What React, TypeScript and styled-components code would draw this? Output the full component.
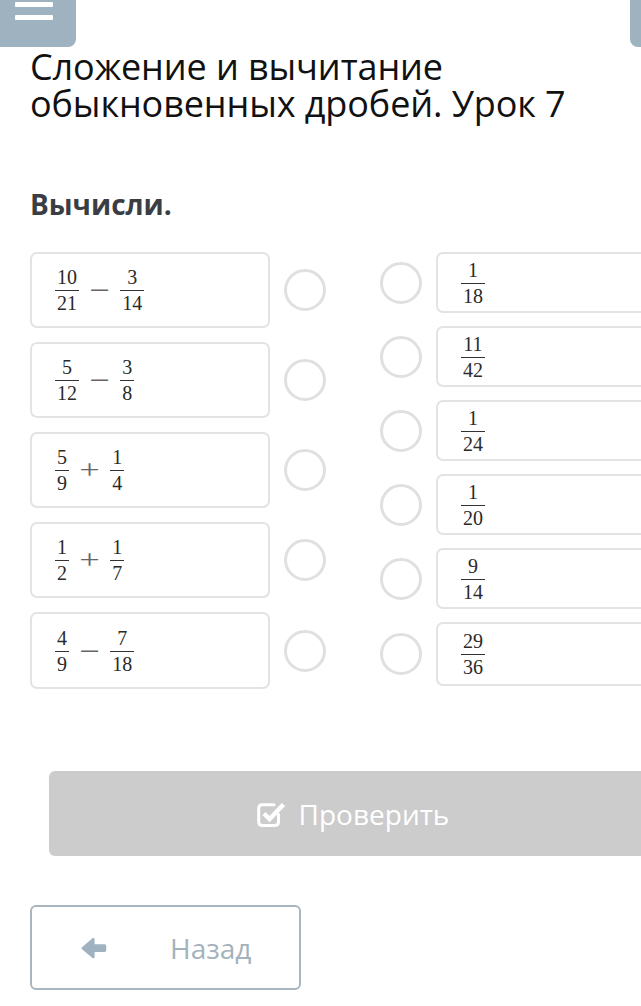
import styled, { createGlobalStyle } from 'styled-components';

const GlobalStyle = createGlobalStyle`
  html, body {
    margin: 0;
    padding: 0;
    background: #ffffff;
  }
  body {
    font-family: "Open Sans", "Noto Sans", sans-serif;
    overflow-x: hidden;
  }
`;

const Page = styled.div`
  width: 641px;
  min-height: 1006px;
  overflow: hidden;
`;

const TopBar = styled.div`
  display: flex;
  justify-content: space-between;
  height: 47px;
`;

const MenuButton = styled.button`
  width: 76px;
  height: 47px;
  border: none;
  padding: 2px 0 0 15px;
  background: #9eb2c0;
  border-bottom-right-radius: 8px;
  display: flex;
  flex-direction: column;
  gap: 8px;
  align-items: flex-start;
`;

const MenuLine = styled.span`
  display: block;
  width: 38px;
  height: 5px;
  background: #ffffff;
  border-radius: 1px;
`;

const SideButton = styled.div`
  width: 40px;
  height: 47px;
  margin-right: -29px;
  background: #9eb2c0;
  border-bottom-left-radius: 8px;
`;

const Content = styled.div`
  padding: 0 0 0 30px;
`;

const Title = styled.h1`
  margin: 0;
  padding-top: 1px;
  font-family: "Open Sans", "Noto Sans", sans-serif;
  font-weight: 400;
  font-size: 36px;
  line-height: 37px;
  color: #111111;
  letter-spacing: -0.1px;
`;

const Task = styled.h2`
  margin: 64px 0 0;
  font-family: "Open Sans", "Noto Sans", sans-serif;
  font-weight: 700;
  font-size: 28px;
  line-height: 36px;
  color: #3a3e43;
`;

const Matching = styled.div`
  display: flex;
  gap: 54px;
  margin-top: 30px;
`;

const Column = styled.div<{ $gap: number }>`
  display: flex;
  flex-direction: column;
  gap: ${(p) => p.$gap}px;
`;

const Row = styled.div`
  display: flex;
  align-items: center;
  gap: 14px;
`;

const Card = styled.div<{ $height: number }>`
  box-sizing: border-box;
  width: 240px;
  height: ${(p) => p.$height}px;
  border: 2px solid #e2e3e4;
  border-radius: 7px;
  padding: 0 22px;
  display: flex;
  align-items: center;
  flex-shrink: 0;
`;

const Radio = styled.span`
  box-sizing: border-box;
  width: 42px;
  height: 42px;
  border: 3px solid #dfe0e1;
  border-radius: 50%;
  flex-shrink: 0;
`;

const Expr = styled.span`
  display: inline-flex;
  align-items: center;
  font-family: "Liberation Serif", "DejaVu Serif", serif;
  color: #2a2a2a;
`;

const Frac = styled.span`
  display: inline-flex;
  flex-direction: column;
  align-items: stretch;
  font-size: 20px;
  line-height: 20px;
  text-align: center;
  padding: 0 1px;
`;

const Num = styled.span`
  padding: 0 2px 3px;
  border-bottom: 1px solid #333333;
`;

const Den = styled.span`
  padding: 2px 2px 0;
`;

const Op = styled.span`
  display: inline-block;
  font-size: 27px;
  line-height: 20px;
  color: #666666;
  margin: 0 12px;
  transform: scaleX(1.35);
`;

const CheckButton = styled.button`
  box-sizing: border-box;
  margin: 82px 0 0 19px;
  width: 608px;
  height: 85px;
  border: none;
  border-radius: 6px;
  background: #cccccc;
  color: #ffffff;
  font-family: "Open Sans", "Noto Sans", sans-serif;
  font-size: 28px;
  display: flex;
  align-items: center;
  justify-content: center;
  gap: 11px;
  padding: 0;
`;

const BackButton = styled.button`
  box-sizing: border-box;
  margin-top: 49px;
  width: 271px;
  height: 85px;
  border: 2px solid #a9b6bf;
  border-radius: 6px;
  background: #ffffff;
  color: #a4b2bb;
  font-family: "Open Sans", "Noto Sans", sans-serif;
  font-size: 28px;
  display: flex;
  align-items: center;
  padding: 0 0 0 48px;
`;

const BackLabel = styled.span`
  margin-left: 63px;
`;

type F = [string, string];
type Item = { parts: F[]; op: string };

const leftItems: Item[] = [
  { parts: [['10', '21'], ['3', '14']], op: '−' },
  { parts: [['5', '12'], ['3', '8']], op: '−' },
  { parts: [['5', '9'], ['1', '4']], op: '+' },
  { parts: [['1', '2'], ['1', '7']], op: '+' },
  { parts: [['4', '9'], ['7', '18']], op: '−' },
];

const rightItems: F[] = [
  ['1', '18'],
  ['11', '42'],
  ['1', '24'],
  ['1', '20'],
  ['9', '14'],
  ['29', '36'],
];

function Fraction({ value }: { value: F }) {
  return (
    <Frac>
      <Num>{value[0]}</Num>
      <Den>{value[1]}</Den>
    </Frac>
  );
}

function CheckSquareIcon() {
  return (
    <svg width="31" height="28" viewBox="0 0 31 28" fill="none">
      <path
        d="M21.5 14.5V21.5C21.5 24 20.2 25.5 17.5 25.5H5.5C3 25.5 1.7 24 1.7 21.5V8.5C1.7 6 3 4.7 5.5 4.7H17"
        stroke="#ffffff"
        strokeWidth="3"
        strokeLinecap="round"
      />
      <path d="M7 13.5L12.5 19L26.5 4.5" stroke="#ffffff" strokeWidth="4.5" />
    </svg>
  );
}

function ArrowLeftIcon() {
  return (
    <svg width="27" height="22" viewBox="0 0 27 22">
      <path
        d="M12.5 1.2L2 10.2C1.3 10.8 1.3 11.6 2 12.2L12.5 21C13.4 21.7 14.6 21 14.6 20V15H24.5C25.6 15 26.2 14.3 26.2 13.3V9C26.2 8 25.6 7.3 24.5 7.3H14.6V2.2C14.6 1.1 13.4 0.5 12.5 1.2Z"
        fill="#9eb2c0"
      />
    </svg>
  );
}

export default function App() {
  return (
    <Page>
      <GlobalStyle />
      <TopBar>
        <MenuButton aria-label="Меню">
          <MenuLine />
          <MenuLine />
        </MenuButton>
        <SideButton />
      </TopBar>
      <Content>
        <Title>
          Сложение и вычитание
          <br />
          обыкновенных дробей. Урок 7
        </Title>
        <Task>Вычисли.</Task>
        <Matching>
          <Column $gap={14}>
            {leftItems.map((item, i) => (
              <Row key={i}>
                <Card $height={i === 4 ? 77 : 76}>
                  <Expr>
                    <Fraction value={item.parts[0]} />
                    <Op>{item.op}</Op>
                    <Fraction value={item.parts[1]} />
                  </Expr>
                </Card>
                <Radio />
              </Row>
            ))}
          </Column>
          <Column $gap={13}>
            {rightItems.map((f, i) => (
              <Row key={i}>
                <Radio />
                <Card $height={i === 5 ? 64 : 61}>
                  <Expr>
                    <Fraction value={f} />
                  </Expr>
                </Card>
              </Row>
            ))}
          </Column>
        </Matching>
        <CheckButton>
          <CheckSquareIcon />
          Проверить
        </CheckButton>
        <BackButton>
          <ArrowLeftIcon />
          <BackLabel>Назад</BackLabel>
        </BackButton>
      </Content>
    </Page>
  );
}
